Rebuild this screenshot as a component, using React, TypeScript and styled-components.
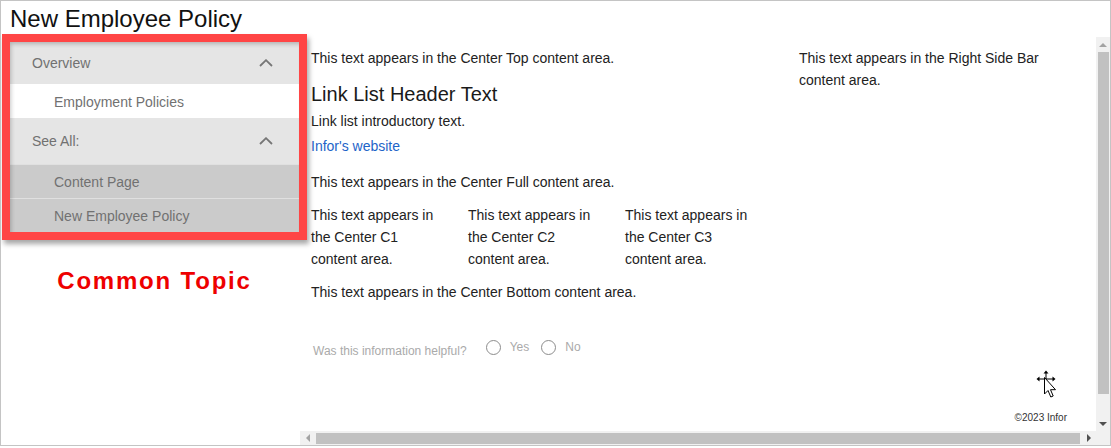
import styled, { createGlobalStyle } from 'styled-components';

const GlobalStyle = createGlobalStyle`
  html, body {
    margin: 0;
    padding: 0;
    background: #fff;
  }
  body {
    font-family: "Liberation Sans", Arial, sans-serif;
  }
  * {
    box-sizing: border-box;
  }
`;

const Frame = styled.div`
  position: relative;
  width: 1111px;
  height: 446px;
  border: 1px solid #c4c4c4;
  display: flex;
  flex-direction: column;
  background: #fff;
  overflow: hidden;
`;

const PageTitle = styled.h1`
  margin: 0;
  height: 33px;
  padding: 2px 0 0 9px;
  font-size: 24px;
  font-weight: normal;
  line-height: 31px;
  color: #111;
  flex-shrink: 0;
`;

const Body = styled.div`
  display: flex;
  flex: 1;
  min-height: 0;
`;

const LeftColumn = styled.aside`
  width: 299px;
  flex-shrink: 0;
  display: flex;
  flex-direction: column;
  align-items: flex-start;
  position: relative;
  z-index: 1;
`;

const Highlight = styled.div`
  margin-left: 1px;
  width: 305px;
  border: 8px solid #ff4545;
  box-shadow: 2px 4px 5px rgba(0, 0, 0, 0.35);
`;

const Nav = styled.nav`
  position: relative;
  display: flex;
  flex-direction: column;
  &::after {
    content: '';
    position: absolute;
    inset: 0;
    pointer-events: none;
    box-shadow: inset 2px 3px 4px -1px rgba(0, 0, 0, 0.22);
  }
`;

const SectionHeader = styled.div<{ $height: number }>`
  display: flex;
  align-items: center;
  justify-content: space-between;
  height: ${(p) => p.$height}px;
  padding: 0 26px 0 22px;
  background: #e5e5e5;
  color: #717171;
  font-size: 14px;
`;

const SubItem = styled.div<{ $current?: boolean }>`
  display: flex;
  align-items: center;
  height: 34px;
  padding-left: 44px;
  font-size: 14px;
  color: #717171;
  background: ${(p) => (p.$current ? '#fff' : '#cbcbcb')};
  border-top: 1px solid ${(p) => (p.$current ? '#fff' : '#e0e0e0')};
`;

const AnnotationLabel = styled.div`
  margin: 27px 0 0 1px;
  width: 305px;
  text-align: center;
  font-size: 24px;
  font-weight: bold;
  letter-spacing: 1.8px;
  line-height: 28px;
  color: #ee0000;
`;

const ScrollArea = styled.div`
  margin-top: 3px;
  flex: 1;
  min-width: 0;
  display: grid;
  grid-template-columns: 1fr 14px;
  grid-template-rows: 1fr 14px;
`;

const Content = styled.main`
  display: flex;
  flex-direction: column;
  padding: 10px 0 0 11px;
  color: #222;
  font-size: 14px;
  line-height: 22px;
  min-height: 0;
`;

const MainRow = styled.div`
  display: flex;
  gap: 17px;
`;

const CenterColumn = styled.section`
  width: 471px;
  display: flex;
  flex-direction: column;
`;

const Text = styled.p<{ $gap?: number }>`
  margin: ${(p) => p.$gap ?? 0}px 0 0;
`;

const LinkHeader = styled.h2`
  margin: 13px 0 0;
  font-size: 20px;
  font-weight: normal;
  line-height: 24px;
  color: #1a1a1a;
`;

const SiteLink = styled.a`
  display: block;
  margin-top: 3px;
  color: #1e64c8;
  text-decoration: none;
`;

const Columns = styled.div`
  margin-top: 11px;
  display: grid;
  grid-template-columns: repeat(3, 157px);
`;

const ColumnText = styled.p`
  margin: 0;
  padding-right: 27px;
`;

const SideBar = styled.section`
  width: 281px;
`;

const HelpfulRow = styled.div`
  margin-top: 37px;
  padding-left: 2px;
  display: flex;
  align-items: flex-start;
  font-size: 12px;
  line-height: 15px;
  color: #aaa;
`;

const Question = styled.span`
  margin-top: 4px;
  margin-right: 19px;
`;

const Option = styled.label`
  display: flex;
  align-items: center;
  gap: 9px;
  margin-right: 12px;
`;

const Radio = styled.span`
  width: 15px;
  height: 15px;
  border-radius: 50%;
  border: 1px solid #8c8c8c;
  background: #fff;
`;

const Footer = styled.footer`
  margin-top: auto;
  align-self: flex-end;
  padding: 0 29px 7px 0;
  font-size: 10px;
  line-height: 12px;
  color: #333;
`;

const VBar = styled.div`
  display: flex;
  flex-direction: column;
  background: #f1f1f1;
`;

const HBar = styled.div`
  display: flex;
  background: #f1f1f1;
`;

const Corner = styled.div`
  background: #f1f1f1;
`;

const ArrowButton = styled.div<{ $dir: 'up' | 'down' | 'left' | 'right'; $active?: boolean }>`
  width: ${(p) => (p.$dir === 'up' || p.$dir === 'down' ? '14px' : '15px')};
  height: ${(p) => (p.$dir === 'up' || p.$dir === 'down' ? '15px' : '14px')};
  flex-shrink: 0;
  display: flex;
  align-items: center;
  justify-content: center;
  &::before {
    content: '';
    width: 0;
    height: 0;
    ${(p) => {
      const c = p.$active ? '#505050' : '#a3a3a3';
      switch (p.$dir) {
        case 'up':
          return `border-left: 4px solid transparent; border-right: 4px solid transparent; border-bottom: 4px solid ${c};`;
        case 'down':
          return `border-left: 4px solid transparent; border-right: 4px solid transparent; border-top: 4px solid ${c};`;
        case 'left':
          return `border-top: 4px solid transparent; border-bottom: 4px solid transparent; border-right: 4px solid ${c};`;
        default:
          return `border-top: 4px solid transparent; border-bottom: 4px solid transparent; border-left: 4px solid ${c};`;
      }
    }}
  }
`;

const VThumb = styled.div`
  height: 342px;
  margin: 0 1px 0 2px;
  background: #c1c1c1;
`;

const HThumb = styled.div`
  width: 764px;
  margin: 2px 0 1px 1px;
  background: #c1c1c1;
`;

const Spacer = styled.div`
  flex: 1;
`;

const Cursor = styled.svg`
  position: absolute;
  left: 1035px;
  top: 369px;
  pointer-events: none;
`;

function Chevron() {
  return (
    <svg width='14' height='8' viewBox='0 0 14 8'>
      <polyline points='1,7 7,1.2 13,7' fill='none' stroke='#767676' strokeWidth='1.8' />
    </svg>
  );
}

function App() {
  return (
    <>
      <GlobalStyle />
      <Frame>
        <PageTitle>New Employee Policy</PageTitle>
        <Body>
          <LeftColumn>
            <Highlight>
              <Nav>
                <SectionHeader $height={42}>
                  Overview
                  <Chevron />
                </SectionHeader>
                <SubItem $current>Employment Policies</SubItem>
                <SectionHeader $height={46}>
                  See All:
                  <Chevron />
                </SectionHeader>
                <SubItem>Content Page</SubItem>
                <SubItem>New Employee Policy</SubItem>
              </Nav>
            </Highlight>
            <AnnotationLabel>Common Topic</AnnotationLabel>
          </LeftColumn>

          <ScrollArea>
            <Content>
              <MainRow>
                <CenterColumn>
                  <Text>This text appears in the Center Top content area.</Text>
                  <LinkHeader>Link List Header Text</LinkHeader>
                  <Text $gap={4}>Link list introductory text.</Text>
                  <SiteLink href='#'>Infor's website</SiteLink>
                  <Text $gap={14}>This text appears in the Center Full content area.</Text>
                  <Columns>
                    <ColumnText>This text appears in the Center C1 content area.</ColumnText>
                    <ColumnText>This text appears in the Center C2 content area.</ColumnText>
                    <ColumnText>This text appears in the Center C3 content area.</ColumnText>
                  </Columns>
                  <Text $gap={11}>This text appears in the Center Bottom content area.</Text>
                </CenterColumn>
                <SideBar>This text appears in the Right Side Bar content area.</SideBar>
              </MainRow>
              <HelpfulRow>
                <Question>Was this information helpful?</Question>
                <Option>
                  <Radio />
                  Yes
                </Option>
                <Option>
                  <Radio />
                  No
                </Option>
              </HelpfulRow>
              <Footer>©2023 Infor</Footer>
            </Content>
            <VBar>
              <ArrowButton $dir='up' />
              <VThumb />
              <Spacer />
              <ArrowButton $dir='down' $active />
            </VBar>
            <HBar>
              <ArrowButton $dir='left' />
              <HThumb />
              <Spacer />
              <ArrowButton $dir='right' $active />
            </HBar>
            <Corner />
          </ScrollArea>
        </Body>
        <Cursor width='24' height='30' viewBox='0 0 24 30'>
          <g fill='#000'>
            <rect x='9.5' y='2' width='1' height='12' />
            <rect x='2' y='8.5' width='16' height='1' />
            <polygon points='10,0.5 7.5,3.5 12.5,3.5' />
            <polygon points='0.5,9 3.5,6.5 3.5,11.5' />
            <polygon points='19.5,9 16.5,6.5 16.5,11.5' />
          </g>
          <polygon
            points='8.5,7.5 8.5,24 12,20.5 14.8,27 17.2,26 14.5,19.7 19.5,19.7'
            fill='#fff'
            stroke='#000'
            strokeWidth='1'
            strokeLinejoin='round'
          />
        </Cursor>
      </Frame>
    </>
  );
}

export default App;
